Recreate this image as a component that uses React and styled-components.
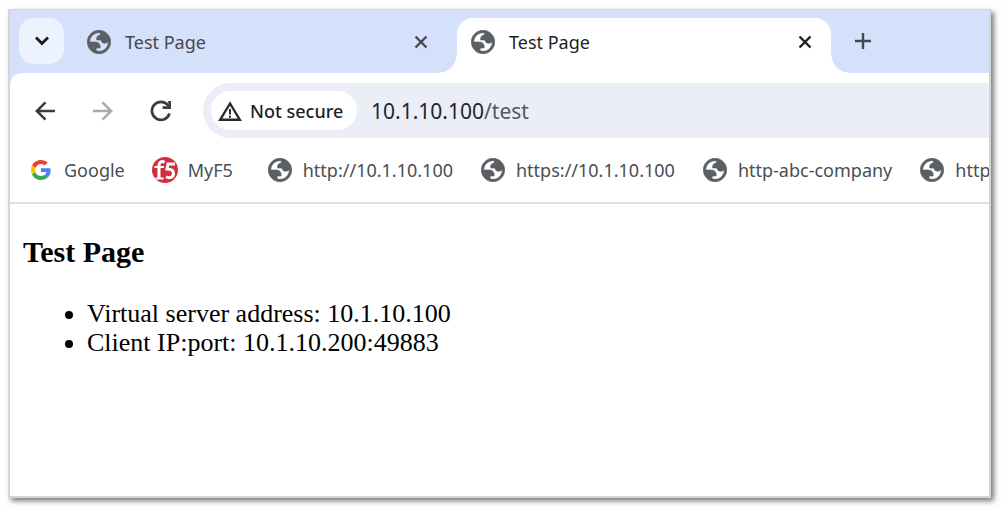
import React from "react";
import styled, { createGlobalStyle, css } from "styled-components";

const GlobalStyle = createGlobalStyle`
  *, *::before, *::after { box-sizing: border-box; }
  body {
    margin: 0;
    background: #fefefe;
    font-family: "Noto Sans", "Open Sans", sans-serif;
  }
`;

const Desktop = styled.div`
  display: flex;
  min-height: 100vh;
  padding: 9px 11px 12px 8px;
`;

const Window = styled.div`
  flex: 1;
  min-width: 0;
  display: flex;
  flex-direction: column;
  overflow: hidden;
  background: #fff;
  border: solid #d4d6d6;
  border-width: 1px 2px 2px;
  box-shadow: 3px 3px 5px rgba(0, 0, 0, 0.5);
`;

const TabStrip = styled.div`
  display: flex;
  align-items: flex-start;
  height: 63px;
  padding: 8px 9px 0;
  background: #d5e1fb;
`;

const iconButton = css`
  display: flex;
  align-items: center;
  justify-content: center;
  flex: none;
  padding: 0;
  border: 0;
  background: none;
`;

const TabSearch = styled.button`
  ${iconButton}
  width: 45px;
  height: 46px;
  margin-right: 9px;
  border-radius: 15px;
  background: #edf3fe;
`;

const TabList = styled.div`
  display: flex;
  flex: 0 1 758px;
  gap: 10px;
  min-width: 0;
`;

const Tab = styled.div`
  position: relative;
  display: flex;
  align-items: center;
  flex: 1;
  min-width: 0;
  height: 55px;
  padding: 0 14px 8px;
  border-radius: 16px 16px 0 0;
  color: ${(p) => (p.$active ? "#1f1f1f" : "#45484d")};

  ${(p) =>
    p.$active &&
    css`
      background: #fff;
      &::before,
      &::after {
        content: "";
        position: absolute;
        bottom: 0;
        width: 18px;
        height: 18px;
      }
      &::before {
        right: 100%;
        background: radial-gradient(circle at 0 0, transparent 17px, #fff 18px);
      }
      &::after {
        left: 100%;
        background: radial-gradient(circle at 100% 0, transparent 17px, #fff 18px);
      }
    `}
`;

const TabTitle = styled.span`
  flex: 1;
  margin-left: 14px;
  font-size: 18px;
  line-height: 24px;
  white-space: nowrap;
`;

const CloseButton = styled.button`
  ${iconButton}
  width: 24px;
  height: 24px;
  color: inherit;
`;

const NewTab = styled.button`
  ${iconButton}
  width: 46px;
  height: 46px;
  margin-left: 9px;
`;

const ToolbarBack = styled.div`
  background: #d5e1fb;
`;

const Toolbar = styled.div`
  display: flex;
  align-items: center;
  padding: 10px 0 10px 14px;
  border-top-left-radius: 12px;
  background: #fff;
`;

const NavButton = styled.button`
  ${iconButton}
  width: 42px;
  height: 42px;
  margin-right: 16px;
  color: ${(p) => (p.$dim ? "#aaa" : "#3c3c3c")};
`;

const Omnibox = styled.div`
  display: flex;
  align-items: center;
  flex: 1;
  min-width: 0;
  height: 55px;
  margin-left: 5px;
  padding-left: 8px;
  border-radius: 28px 0 0 28px;
  background: #ebeef7;
`;

const SecurityChip = styled.button`
  ${iconButton}
  justify-content: flex-start;
  gap: 8px;
  width: 146px;
  height: 39px;
  padding-left: 7px;
  border-radius: 20px;
  background: #fff;
  color: #1f1f1f;
  font-family: inherit;
  font-size: 18px;
  font-weight: 500;
  line-height: 24px;
  white-space: nowrap;
`;

const Address = styled.div`
  margin-left: 14px;
  font-size: 21px;
  line-height: 28px;
  color: #1f2330;
  white-space: nowrap;
`;

const AddressPath = styled.span`
  color: #55585f;
`;

const Bookmarks = styled.nav`
  display: flex;
  align-items: center;
  gap: 27px;
  height: 56px;
  padding: 0 0 10px 18px;
  overflow: hidden;
  border-bottom: 2px solid #dfdfdf;
`;

const Bookmark = styled.a`
  display: flex;
  align-items: center;
  flex: none;
  gap: 10px;
  min-width: 88px;
  color: #4a4d52;
  font-size: 18px;
  line-height: 24px;
  text-decoration: none;
  white-space: nowrap;
`;

const IconBox = styled.span`
  display: flex;
  align-items: center;
  justify-content: center;
  width: 26px;
  height: 26px;
`;

const Page = styled.main`
  flex: 1;
  padding: 31px 13px;
  color: #000;
  font-family: "Liberation Serif", serif;
`;

const PageTitle = styled.h3`
  margin: 0;
  font-size: 30px;
  line-height: 34px;
`;

const Facts = styled.ul`
  margin: 30px 0 0;
  padding-left: 64px;
  font-size: 26px;
  line-height: 29px;
`;

const Globe = () => (
  <svg width="24" height="24" viewBox="1.700 1.700 20.600 20.600" fill="#5b5f64" fillRule="evenodd" stroke="#5b5f64" strokeWidth="0.600" aria-hidden="true">
    <path d="M12 2C6.48 2 2 6.48 2 12s4.48 10 10 10 10-4.48 10-10S17.52 2 12 2zM4 12h4.4c3.407.022 4.922 1.73 4.543 5.127H9.488v2.47a8.004 8.004 0 0 0 10.498-8.083C19.327 12.504 18.332 13 17 13c-2.137 0-3.206-.916-3.206-2.75h-3.748c-.274-2.728.683-4.092 2.87-4.092 0-.975.327-1.597.811-1.97A8.004 8.004 0 0 0 4 12z" />
  </svg>
);

const GoogleMark = () => (
  <svg width="20" height="20" viewBox="0 0 48 48" aria-hidden="true">
    <path fill="#EA4335" d="M24 9.5c3.54 0 6.71 1.22 9.21 3.6l6.85-6.85C35.9 2.38 30.47 0 24 0 14.62 0 6.51 5.38 2.56 13.22l7.98 6.19C12.43 13.72 17.74 9.5 24 9.5z" />
    <path fill="#4285F4" d="M46.98 24.55c0-1.57-.15-3.09-.38-4.55H24v9.02h12.94c-.58 2.96-2.26 5.48-4.78 7.18l7.73 6c4.51-4.18 7.09-10.36 7.09-17.65z" />
    <path fill="#FBBC05" d="M10.53 28.59c-.48-1.45-.76-2.99-.76-4.59s.27-3.14.76-4.59l-7.98-6.19C.92 16.46 0 20.12 0 24c0 3.88.92 7.54 2.56 10.78l7.97-6.19z" />
    <path fill="#34A853" d="M24 48c6.48 0 11.93-2.13 15.89-5.81l-7.73-6c-2.15 1.45-4.92 2.3-8.16 2.3-6.26 0-11.57-4.22-13.47-9.91l-7.98 6.19C6.51 42.62 14.62 48 24 48z" />
  </svg>
);

const F5Mark = () => (
  <svg width="26" height="26" viewBox="0 0 26 26" fill="none" aria-hidden="true">
    <circle cx="13" cy="13" r="13" fill="#d0303e" />
    <path d="M12.500 5.500C9.500 3.500 7 5 7 9v12" stroke="#fff" strokeWidth="3" />
    <path d="M2.500 10h9.500M3.500 21.500h8" stroke="#fff" strokeWidth="2" />
    <path d="M23 7h-7l-1 5c4 0 6.500 1.800 6.500 4.800 0 3.500-4 5-7.500 3" stroke="#fff" strokeWidth="3" />
  </svg>
);

const Cross = () => (
  <svg width="14" height="14" viewBox="0 0 14 14" stroke="currentColor" strokeWidth="2.4" aria-hidden="true">
    <path d="M1.500 1.500l11 11M12.500 1.500l-11 11" />
  </svg>
);

const bookmarks = [
  { label: "Google", icon: <GoogleMark /> },
  { label: "MyF5", icon: <F5Mark /> },
  { label: "http://10.1.10.100", icon: <Globe /> },
  { label: "https://10.1.10.100", icon: <Globe /> },
  { label: "http-abc-company", icon: <Globe /> },
  { label: "http", icon: <Globe /> },
];

export default function App() {
  return (
    <>
      <GlobalStyle />
      <Desktop>
        <Window>
          <TabStrip>
            <TabSearch aria-label="Search tabs">
              <svg width="16" height="10" viewBox="0 0 16 10" fill="none" stroke="#1b1b1f" strokeWidth="2.800" aria-hidden="true">
                <path d="M2 1.500l6 6 6-6" />
              </svg>
            </TabSearch>
            <TabList>
              {[false, true].map((active) => (
                <Tab key={String(active)} $active={active}>
                  <Globe />
                  <TabTitle>Test Page</TabTitle>
                  <CloseButton aria-label="Close tab">
                    <Cross />
                  </CloseButton>
                </Tab>
              ))}
            </TabList>
            <NewTab aria-label="New tab">
              <svg width="18" height="18" viewBox="0 0 18 18" stroke="#45484d" strokeWidth="2.400" aria-hidden="true">
                <path d="M9 1v16M1 9h16" />
              </svg>
            </NewTab>
          </TabStrip>
          <ToolbarBack>
            <Toolbar>
              <NavButton aria-label="Back">
                <svg width="20" height="20" viewBox="0 0 20 20" fill="none" stroke="currentColor" strokeWidth="2.500" aria-hidden="true">
                  <path d="M20 10H2M10.500 1.300L1.800 10l8.700 8.700" />
                </svg>
              </NavButton>
              <NavButton aria-label="Forward" $dim>
                <svg width="20" height="20" viewBox="0 0 20 20" fill="none" stroke="currentColor" strokeWidth="2.500" aria-hidden="true">
                  <path d="M0 10h18M9.500 1.300l8.700 8.700-8.700 8.700" />
                </svg>
              </NavButton>
              <NavButton aria-label="Reload">
                <svg width="22" height="22" viewBox="0 0 22 22" fill="none" stroke="currentColor" strokeWidth="2.700" aria-hidden="true">
                  <path d="M19.500 13.500A9 9 0 1 1 17.800 5l1.700 2" />
                  <path d="M19.600 1v6.700h-7" />
                </svg>
              </NavButton>
              <Omnibox>
                <SecurityChip>
                  <svg width="24" height="20" viewBox="0 0 24 20" fill="none" stroke="#2b2b2b" strokeWidth="2.400" aria-hidden="true">
                    <path d="M12 2.500L2.200 18.700h19.600z" />
                    <path d="M12 8v5.500M12 14.800v2" strokeWidth="2" />
                  </svg>
                  Not secure
                </SecurityChip>
                <Address>
                  10.1.10.100<AddressPath>/test</AddressPath>
                </Address>
              </Omnibox>
            </Toolbar>
          </ToolbarBack>
          <Bookmarks aria-label="Bookmarks">
            {bookmarks.map((b) => (
              <Bookmark key={b.label} href="#">
                <IconBox>{b.icon}</IconBox>
                {b.label}
              </Bookmark>
            ))}
          </Bookmarks>
          <Page>
            <PageTitle>Test Page</PageTitle>
            <Facts>
              <li>Virtual server address: 10.1.10.100</li>
              <li>Client IP:port: 10.1.10.200:49883</li>
            </Facts>
          </Page>
        </Window>
      </Desktop>
    </>
  );
}
